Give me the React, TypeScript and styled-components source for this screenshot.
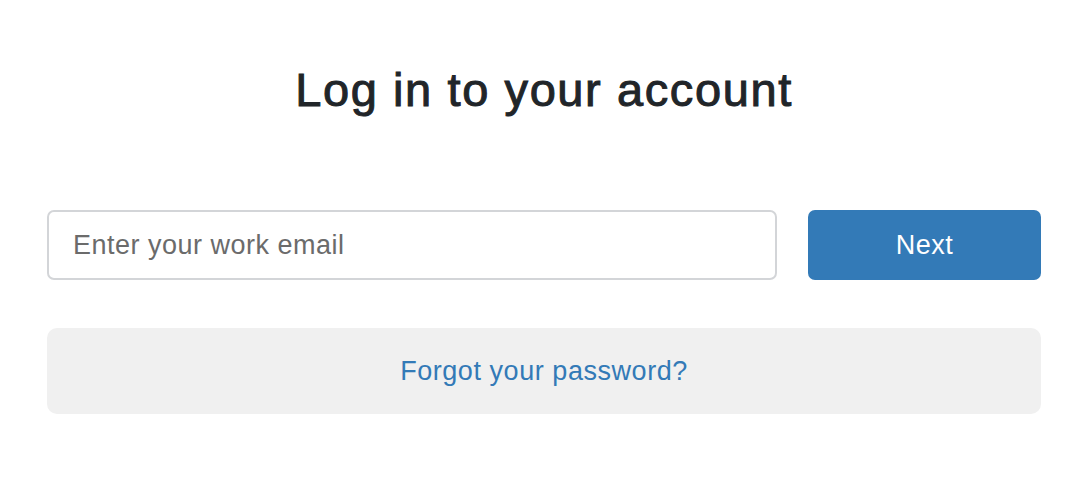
import React from "react";
import styled, { createGlobalStyle } from "styled-components";

const Global = createGlobalStyle`
  html, body { margin: 0; padding: 0; background: #fff; }
  body { font-family: "Liberation Sans", Arial, sans-serif; }
  * { box-sizing: border-box; }
`;

const Page = styled.main`
  width: 994px;
  margin: 0 auto;
  padding-top: 62px;
  display: flex;
  flex-direction: column;
`;

const Title = styled.h1`
  margin: 0;
  text-align: center;
  font-size: 47px;
  font-weight: 400;
  line-height: 56px;
  color: #212529;
  letter-spacing: 1.6px;
  -webkit-text-stroke: 1px #212529;
`;

const Row = styled.form`
  margin-top: 92px;
  display: flex;
  gap: 31px;
`;

const Input = styled.input`
  flex: 1;
  height: 70px;
  border: 2px solid #d3d5d8;
  border-radius: 7px;
  padding: 0 24px;
  font-family: "Liberation Sans", Arial, sans-serif;
  font-size: 27px;
  letter-spacing: 0.5px;
  color: #333;
  outline: none;
  &::placeholder { color: #6b6b6b; }
`;

const NextButton = styled.button`
  width: 233px;
  height: 70px;
  border: none;
  border-radius: 7px;
  background: #337ab7;
  color: #fff;
  font-family: "Liberation Sans", Arial, sans-serif;
  font-size: 27px;
  letter-spacing: 0.5px;
`;

const ForgotBox = styled.div`
  margin-top: 48px;
  height: 86px;
  border-radius: 10px;
  background: #f0f0f0;
  display: flex;
  align-items: center;
  justify-content: center;
`;

const ForgotLink = styled.a`
  color: #337ab7;
  font-size: 27px;
  letter-spacing: 0.55px;
  text-decoration: none;
`;

export default function App() {
  return (
    <>
      <Global />
      <Page>
        <Title>Log in to your account</Title>
        <Row onSubmit={(e) => e.preventDefault()}>
          <Input type="email" placeholder="Enter your work email" />
          <NextButton type="submit">Next</NextButton>
        </Row>
        <ForgotBox>
          <ForgotLink href="#">Forgot your password?</ForgotLink>
        </ForgotBox>
      </Page>
    </>
  );
}
